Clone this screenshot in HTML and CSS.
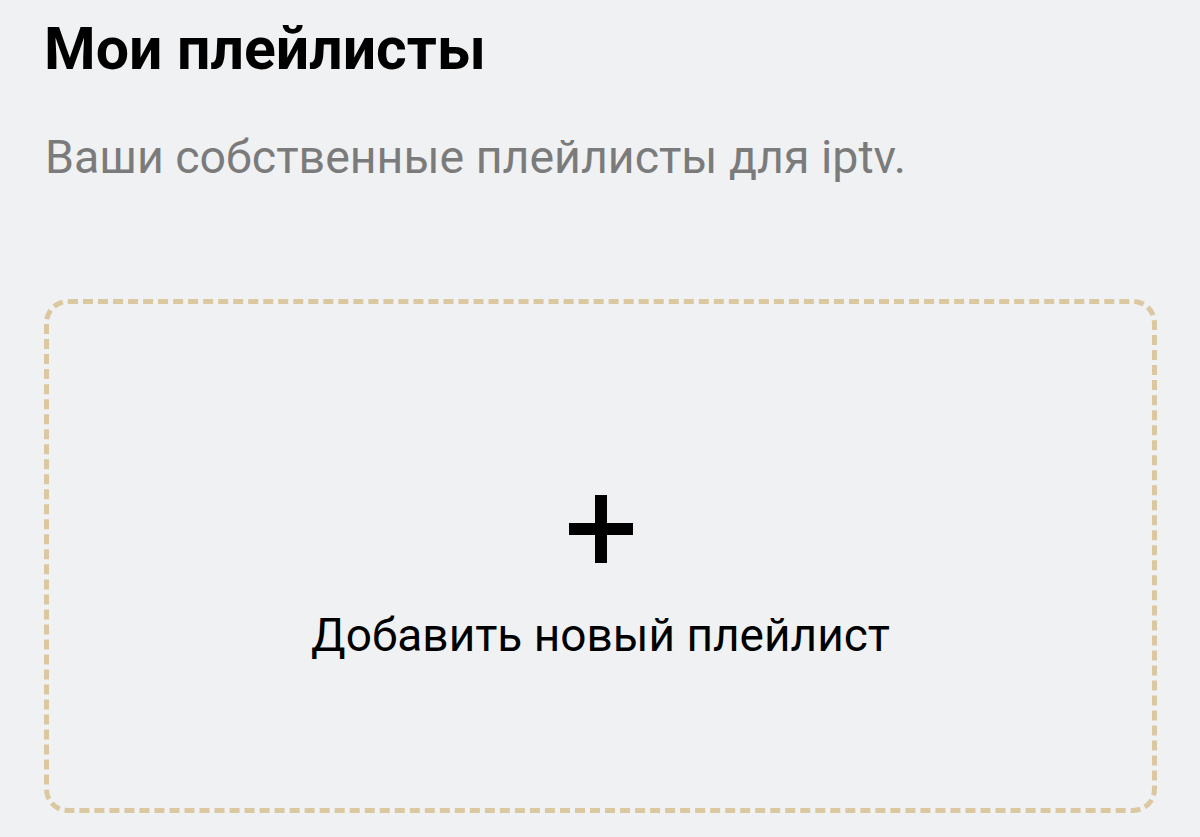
FILE: index.html
```html
<!DOCTYPE html>
<html lang="ru">
<head>
<meta charset="utf-8">
<title>Мои плейлисты</title>
<link rel="stylesheet" href="styles.css">
</head>
<body>
<main class="page">
  <h1 class="title">Мои плейлисты</h1>
  <p class="subtitle">Ваши собственные плейлисты для iptv.</p>
  <button class="add-card" type="button">
    <svg class="plus" width="64" height="68" viewBox="0 0 64 68" aria-hidden="true">
      <rect x="26" y="0" width="12" height="68" fill="#000"/>
      <rect x="0" y="28" width="64" height="12" fill="#000"/>
    </svg>
    <span class="add-label">Добавить новый плейлист</span>
  </button>
</main>
</body>
</html>
```
FILE: styles.css
```css
html, body {
  margin: 0;
  padding: 0;
  background: #f0f1f3;
}
body {
  font-family: Roboto, "Noto Sans", sans-serif;
  overflow: hidden;
}
.page {
  padding: 19px 43px 0 44px;
  display: flex;
  flex-direction: column;
}
.title {
  margin: 0;
  font-size: 59px;
  line-height: 60px;
  font-weight: 700;
  color: #000;
}
.subtitle {
  margin: 55px 0 0 1px;
  font-size: 46.5px;
  line-height: 46px;
  font-weight: 400;
  color: #7b7b7b;
}
.add-card {
  margin-top: 119px;
  height: 514px;
  border: 5px dashed #dbc8a0;
  border-radius: 24px;
  background: transparent;
  display: flex;
  flex-direction: column;
  align-items: center;
  justify-content: center;
  gap: 49px;
  padding: 40px 0 0 0;
  font-family: inherit;
  cursor: pointer;
}
.add-label {
  font-size: 46px;
  line-height: 46px;
  color: #000;
}
```
